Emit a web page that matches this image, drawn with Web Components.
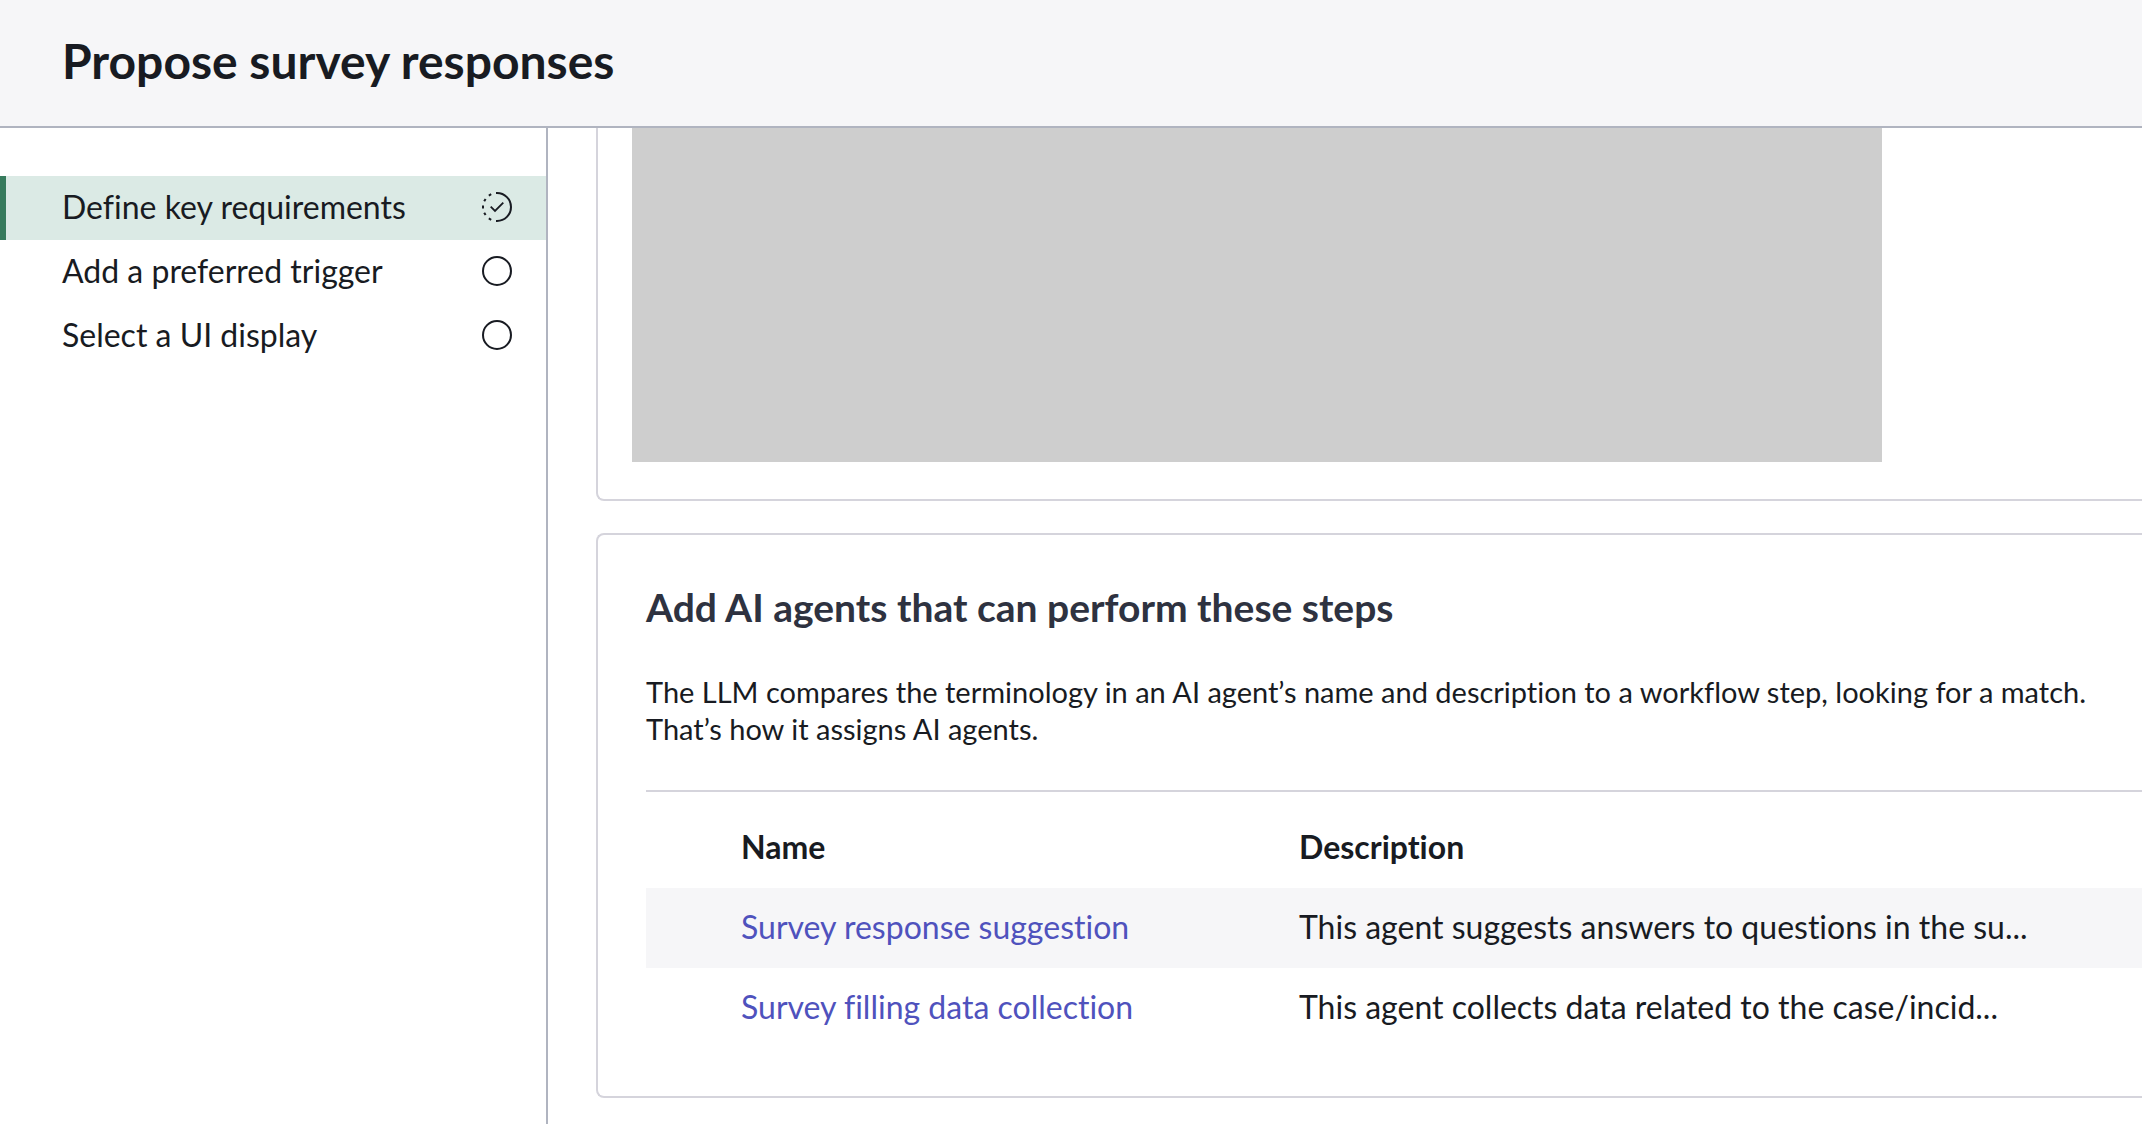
<!DOCTYPE html>
<html lang="en">
<head>
<meta charset="utf-8">
<title>Propose survey responses</title>
<style>
  :root {
    --ink: #181b22;
    --heading: #2e3240;
    --line: #d5d4dc;
    --divider: #b0b4c0;
    --surface: #f6f6f8;
    --link: #4f52bd;
    --accent: #377b5d;
    --accent-soft: #dbeae5;
  }
  body { margin: 0; background: #fff; color: var(--ink); font: 32px/40px Lato, "Liberation Sans", sans-serif; font-variant-ligatures: none; }
</style>
</head>
<body>
<setup-page>
  <page-header slot="header">Propose survey responses</page-header>
  <step-nav slot="nav">
    <step-item state="partial" current>Define key requirements</step-item>
    <step-item state="empty">Add a preferred trigger</step-item>
    <step-item state="empty">Select a UI display</step-item>
  </step-nav>
  <media-card></media-card>
  <agent-card>
    <span slot="title">Add AI agents that can perform these steps</span>
    The LLM compares the terminology in an AI agent’s name and description to a workflow step, looking for a match.<br>That’s how it assigns AI agents.
    <agent-table slot="table"></agent-table>
  </agent-card>
</setup-page>

<script>
  const define = (name, html, setup) => {
    const template = document.createElement('template');
    template.innerHTML = html;
    customElements.define(name, class extends HTMLElement {
      constructor() {
        super();
        this.attachShadow({ mode: 'open' }).append(template.content.cloneNode(true));
      }
      connectedCallback() { if (setup) setup(this, this.shadowRoot); }
    });
  };

  define('setup-page', `
    <style>
      :host { display: flex; flex-direction: column; height: 100vh; overflow: hidden; }
      .body { display: flex; flex: 1; min-height: 0; }
      main { display: flex; flex-direction: column; gap: 32px; flex: 1; min-width: 0; padding-left: 48px; overflow: hidden; }
    </style>
    <slot name="header"></slot>
    <div class="body"><slot name="nav"></slot><main><slot></slot></main></div>
  `);

  define('page-header', `
    <style>
      :host { display: block; flex: none; background: var(--surface); border-bottom: 2px solid var(--divider); }
      h1 { margin: 0; padding: 31px 62px 35px; font-size: 48px; line-height: 60px; font-weight: 700; }
    </style>
    <h1><slot></slot></h1>
  `);

  define('step-nav', `
    <style>
      :host { display: block; flex: none; width: 546px; border-right: 2px solid var(--divider); }
      nav { display: flex; flex-direction: column; padding-top: 48px; }
    </style>
    <nav aria-label="Setup steps"><slot></slot></nav>
  `);

  const icons = {
    empty: '<circle cx="16" cy="16" r="14"/>',
    partial: '<path d="M15 2h1a14 14 0 0 1 0 28h-1"/><path stroke-width="1.800" d="M9.700 15.700 14 20l8.300-8.300"/>' +
      '<path d="M7.800 4.600l2.400-1.400M3.200 10.300l1.400-2.400M2 17.400v-2.800M3.200 21.700l1.400 2.400M7.800 27.400l2.400 1.400"/>'
  };

  define('step-item', `
    <style>
      :host { display: block; }
      a { display: flex; align-items: center; justify-content: space-between; padding: 11px 33px 13px 56px;
          border-left: 6px solid transparent; color: inherit; text-decoration: none; }
      :host([current]) a { background: var(--accent-soft); border-color: var(--accent); }
      svg { width: 32px; height: 32px; fill: none; stroke: currentColor; stroke-width: 2; }
    </style>
    <a href="#"><span><slot></slot></span><svg viewBox="0 0 32 32" aria-hidden="true"></svg></a>
  `, (host, root) => {
    root.querySelector('svg').innerHTML = icons[host.getAttribute('state')];
    if (host.hasAttribute('current')) root.querySelector('a').setAttribute('aria-current', 'step');
  });

  define('media-card', `
    <style>
      :host { display: block; flex: none; padding: 0 0 37px 34px; border: solid var(--line); border-width: 0 0 2px 2px;
              border-bottom-left-radius: 8px; }
      .media { max-width: 1250px; height: 334px; background: #cecece; }
    </style>
    <div class="media"></div>
  `);

  define('agent-card', `
    <style>
      :host { display: block; flex: none; padding: 48px 0 48px 48px; border: solid var(--line); border-width: 2px 0 2px 2px;
              border-radius: 8px 0 0 8px; }
      h2 { margin: 0 0 42px; font-size: 39px; line-height: 48px; font-weight: 700; color: var(--heading); }
      p { margin: 0 0 43px; font-size: 29px; line-height: 37px; }
    </style>
    <h2><slot name="title"></slot></h2>
    <p><slot></slot></p>
    <slot name="table"></slot>
  `);

  define('agent-table', `
    <style>
      :host { display: block; border-top: 2px solid var(--line); }
      table { width: 100%; border-collapse: collapse; table-layout: fixed; }
      col:first-child { width: 653px; }
      th, td { padding: 19px 0 21px; text-align: left; }
      th { padding-top: 35px; font-weight: 700; }
      th:first-child, td:first-child { padding-left: 95px; }
      tbody tr:nth-child(odd) { background: var(--surface); }
      a { color: var(--link); text-decoration: none; }
    </style>
    <table>
      <colgroup><col><col></colgroup>
      <thead><tr><th scope="col">Name</th><th scope="col">Description</th></tr></thead>
      <tbody>
        <tr><td><a href="#">Survey response suggestion</a></td><td>This agent suggests answers to questions in the su...</td></tr>
        <tr><td><a href="#">Survey filling data collection</a></td><td>This agent collects data related to the case/incid...</td></tr>
      </tbody>
    </table>
  `);
</script>
</body>
</html>
